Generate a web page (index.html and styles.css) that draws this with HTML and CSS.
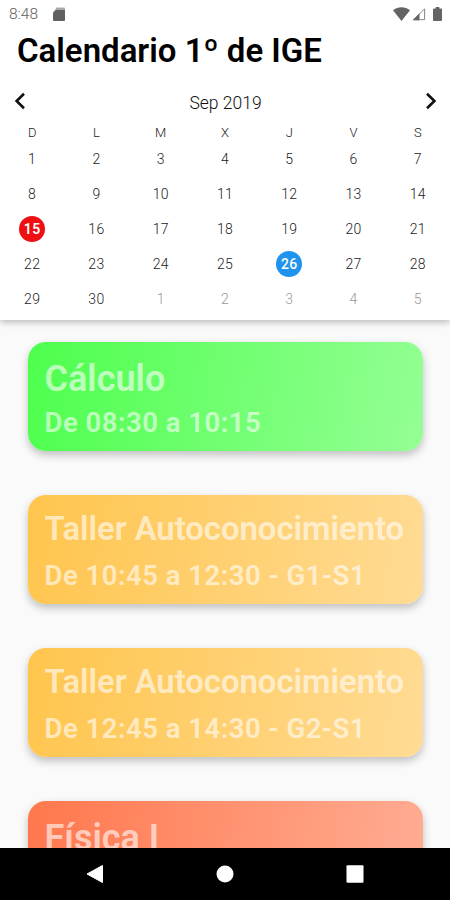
FILE: index.html
```html
<!DOCTYPE html>
<html lang="es">
<head>
  <meta charset="UTF-8" />
  <meta name="viewport" content="width=device-width, initial-scale=1.0"/>
  <title>Calendario 1º de IGE</title>
  <link rel="stylesheet" href="styles.css">
</head>
<body>
  <div class="screen">
    <header class="top">
      <!-- Status bar -->
      <div class="status-bar">
        <span class="clock">8:48</span>
        <svg class="sd" width="12" height="14" viewBox="0 0 12 14">
          <path d="M3.5 0.5H11a1 1 0 0 1 1 1V3H2z" fill="#a9a9a9"/>
          <path d="M2.5 3H12v10a1 1 0 0 1-1 1H1a1 1 0 0 1-1-1V5.5z" fill="#606060"/>
        </svg>
        <svg class="wifi" width="17" height="14" viewBox="0 0 17 14">
          <path d="M0 3.2C4.8-.7 12.2-.7 17 3.2L8.5 14z" fill="#646464"/>
        </svg>
        <svg class="signal" width="14" height="14" viewBox="0 0 14 14">
          <path d="M1.8 12.7L12.6 1.8V12.7z" fill="none" stroke="#858585" stroke-width="1"/>
          <path d="M.6 13.2L7.5 6.3V13.2z" fill="#646464"/>
        </svg>
        <svg class="battery" width="9" height="14" viewBox="0 0 9 14">
          <path d="M2.7 0h3.6v1.4H8a1 1 0 0 1 1 1V13a1 1 0 0 1-1 1H1a1 1 0 0 1-1-1V2.4a1 1 0 0 1 1-1h1.7z" fill="#646464"/>
        </svg>
      </div>

      <h1 class="title">Calendario 1º de IGE</h1>

      <!-- Month selector -->
      <div class="month-nav">
        <svg width="12" height="18" viewBox="0 0 12 18"><path d="M10 1.8L2.6 9L10 16.2" fill="none" stroke="#111" stroke-width="2.6"/></svg>
        <span class="month">Sep 2019</span>
        <svg width="12" height="18" viewBox="0 0 12 18"><path d="M2 1.8L9.4 9L2 16.2" fill="none" stroke="#111" stroke-width="2.6"/></svg>
      </div>

      <div class="weekdays">
        <span>D</span><span>L</span><span>M</span><span>X</span><span>J</span><span>V</span><span>S</span>
      </div>
      <div class="days">
        <span>1</span><span>2</span><span>3</span><span>4</span><span>5</span><span>6</span><span>7</span>
        <span>8</span><span>9</span><span>10</span><span>11</span><span>12</span><span>13</span><span>14</span>
        <span class="today">15</span><span>16</span><span>17</span><span>18</span><span>19</span><span>20</span><span>21</span>
        <span>22</span><span>23</span><span>24</span><span>25</span><span class="selected">26</span><span>27</span><span>28</span>
        <span>29</span><span>30</span><span class="other">1</span><span class="other">2</span><span class="other">3</span><span class="other">4</span><span class="other">5</span>
      </div>
    </header>

    <!-- Classes of the selected day -->
    <main class="classes">
      <div class="card green">
        <h2 class="short">Cálculo</h2>
        <p>De 08:30 a 10:15</p>
      </div>
      <div class="card yellow">
        <h2>Taller Autoconocimiento</h2>
        <p>De 10:45 a 12:30 - G1-S1</p>
      </div>
      <div class="card yellow">
        <h2>Taller Autoconocimiento</h2>
        <p>De 12:45 a 14:30 - G2-S1</p>
      </div>
      <div class="card red">
        <h2 class="short">Física I</h2>
      </div>
    </main>

    <nav class="nav-bar">
      <svg width="18" height="20" viewBox="0 0 18 20"><path d="M1 10L16.5 1.5V18.5z" fill="#fff" stroke="#fff" stroke-linejoin="round"/></svg>
      <svg width="18" height="20" viewBox="0 0 18 20"><circle cx="9" cy="10" r="8.5" fill="#fff"/></svg>
      <svg width="18" height="20" viewBox="0 0 18 20"><rect x=".5" y="1.3" width="17" height="17.4" rx="1" fill="#fff"/></svg>
    </nav>
  </div>
</body>
</html>
```
FILE: styles.css
```css
* {
  box-sizing: border-box;
}

body {
  margin: 0;
  font-family: Roboto, 'Liberation Sans', sans-serif;
  background-color: #fafafa;
}

.screen {
  display: flex;
  flex-direction: column;
  width: 450px;
  height: 900px;
  overflow: hidden;
}

.top {
  height: 320px;
  flex-shrink: 0;
  background-color: #fff;
  box-shadow: 0 2px 7px rgba(0, 0, 0, 0.28);
}

.status-bar {
  display: flex;
  align-items: center;
  height: 28px;
  padding: 0 8px 0 9px;
}

.clock {
  width: 44px;
  font-size: 15.5px;
  font-weight: 300;
  color: #606060;
}

.wifi {
  margin-left: auto;
}

.signal {
  margin-left: 2px;
}

.battery {
  margin-left: 7px;
}

.title {
  margin: 0;
  padding: 1px 0 0 17px;
  font-size: 33px;
  line-height: 44px;
  font-weight: 600;
  color: #000;
  white-space: nowrap;
}

.month-nav {
  display: flex;
  align-items: center;
  justify-content: space-between;
  height: 28px;
  margin-top: 15px;
  padding: 0 13px 0 14px;
}

.month-nav svg {
  margin-top: -3px;
}

.month-nav .month {
  margin-top: 1px;
  font-size: 17.5px;
  font-weight: 300;
  color: #111;
}

.weekdays,
.days {
  display: grid;
  grid-template-columns: repeat(7, 1fr);
  justify-items: center;
  align-items: center;
  font-weight: 300;
  color: #222;
}

.weekdays {
  height: 25px;
  padding-top: 8px;
  font-size: 13px;
}

.days {
  grid-auto-rows: 35px;
  font-size: 14px;
  letter-spacing: 0.3px;
}

.days .other {
  color: #999;
}

.today,
.selected {
  width: 26px;
  height: 26px;
  line-height: 27px;
  border-radius: 50%;
  text-align: center;
  font-weight: 600;
  color: #fff;
}

.today {
  background-color: #ee0f12;
}

.selected {
  background-color: #1f93ee;
  font-weight: 500;
}

.classes {
  display: flex;
  flex-direction: column;
  gap: 44px;
  flex: 1;
  min-height: 0;
  padding: 22px 27px 0 28px;
  overflow: hidden;
}

.card {
  height: 109px;
  flex-shrink: 0;
  padding: 14px 17px 0 16.5px;
  border-radius: 18px;
  box-shadow: 0 4px 8px rgba(0, 0, 0, 0.24);
  color: rgba(255, 255, 255, 0.62);
  white-space: nowrap;
}

.card h2 {
  margin: 0;
  font-size: 32.8px;
  line-height: 41px;
  font-weight: 600;
}

.card h2.short {
  font-size: 36px;
  line-height: 46px;
}

.card p {
  margin: 0;
  padding-top: 4px;
  font-size: 27.5px;
  line-height: 44px;
  font-weight: 600;
  letter-spacing: 0.5px;
}

.card h2.short + p {
  padding-top: 0;
  line-height: 42px;
}

.green {
  background: linear-gradient(100deg, #4dff4d, #94ff94);
}

.yellow {
  background: linear-gradient(100deg, #ffc54d, #ffdb94);
}

.red {
  background: linear-gradient(100deg, #ff774d, #ffad94);
}

.nav-bar {
  display: flex;
  align-items: center;
  justify-content: space-between;
  height: 52px;
  flex-shrink: 0;
  padding: 0 86px;
  background-color: #000;
}
```
